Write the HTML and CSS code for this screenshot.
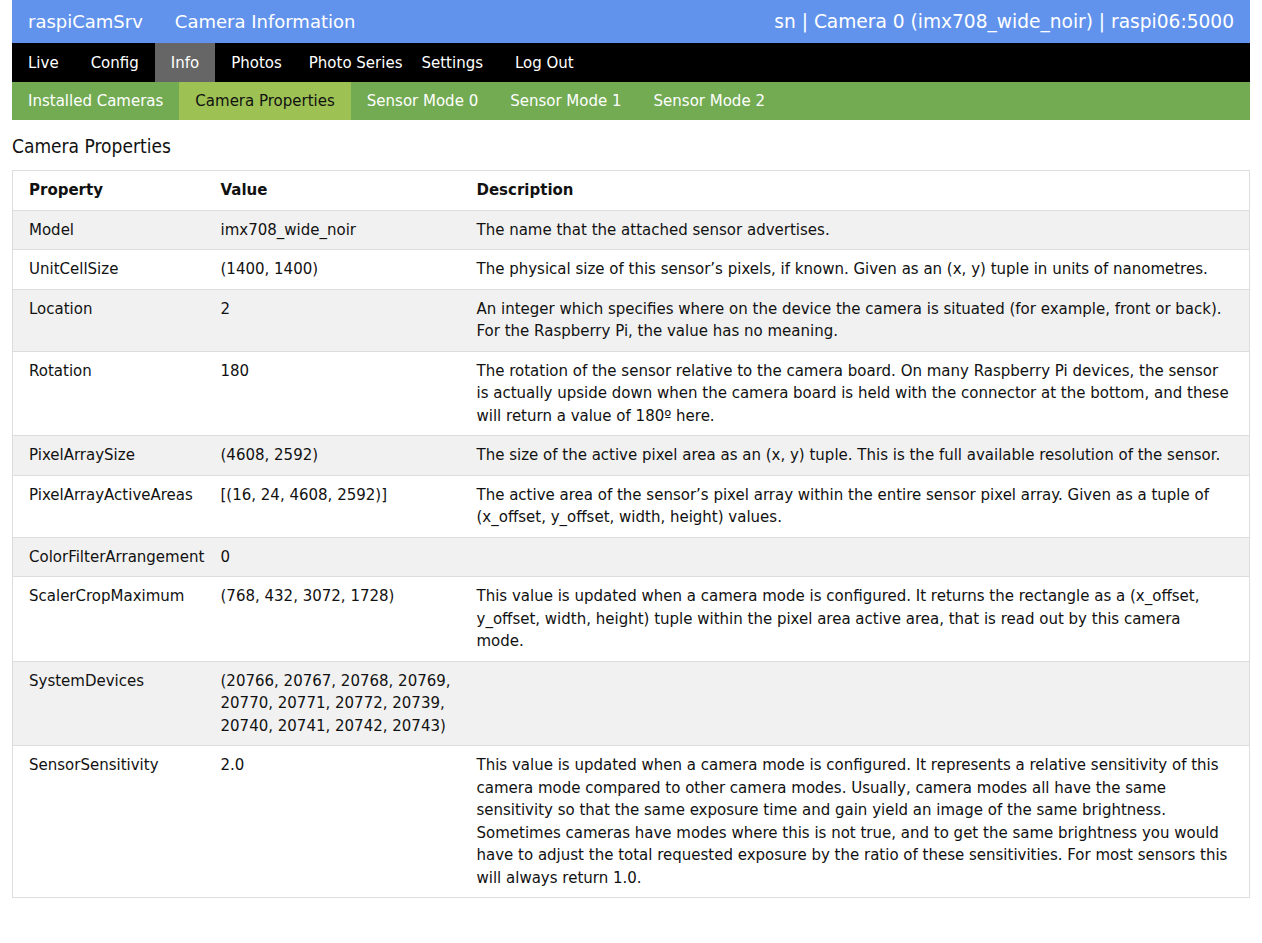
FILE: index.html
```html
<!DOCTYPE html>
<html lang="en">
<head>
<meta charset="utf-8">
<title>raspiCamSrv - Camera Information</title>
<link rel="stylesheet" href="styles.css">
</head>
<body>
<header class="topbar">
  <div class="brand">
    <span class="app">raspiCamSrv</span>
    <span class="page">Camera Information</span>
  </div>
  <div class="status">sn | Camera 0 (imx708_wide_noir) | raspi06:5000</div>
</header>
<nav class="mainnav">
  <a class="item">Live</a>
  <a class="item">Config</a>
  <a class="item active">Info</a>
  <a class="item snug">Photos</a>
  <a class="item tight">Photo Series</a>
  <a class="item">Settings</a>
  <a class="item">Log Out</a>
</nav>
<nav class="subnav">
  <a class="sub">Installed Cameras</a>
  <a class="sub active">Camera Properties</a>
  <a class="sub">Sensor Mode 0</a>
  <a class="sub">Sensor Mode 1</a>
  <a class="sub">Sensor Mode 2</a>
</nav>
<main class="content">
  <h2 class="title">Camera Properties</h2>
  <table class="props">
    <colgroup><col class="c1"><col class="c2"><col class="c3"></colgroup>
    <thead>
      <tr><th>Property</th><th>Value</th><th>Description</th></tr>
    </thead>
    <tbody>
      <tr><td>Model</td><td>imx708_wide_noir</td><td>The name that the attached sensor advertises.</td></tr>
      <tr><td>UnitCellSize</td><td>(1400, 1400)</td><td>The physical size of this sensor’s pixels, if known. Given as an (x, y) tuple in units of nanometres.</td></tr>
      <tr><td>Location</td><td>2</td><td>An integer which specifies where on the device the camera is situated (for example, front or back). For the Raspberry Pi, the value has no meaning.</td></tr>
      <tr><td>Rotation</td><td>180</td><td>The rotation of the sensor relative to the camera board. On many Raspberry Pi devices, the sensor is actually upside down when the camera board is held with the connector at the bottom, and these will return a value of 180º here.</td></tr>
      <tr><td>PixelArraySize</td><td>(4608, 2592)</td><td>The size of the active pixel area as an (x, y) tuple. This is the full available resolution of the sensor.</td></tr>
      <tr><td>PixelArrayActiveAreas</td><td>[(16, 24, 4608, 2592)]</td><td>The active area of the sensor’s pixel array within the entire sensor pixel array. Given as a tuple of (x_offset, y_offset, width, height) values.</td></tr>
      <tr><td>ColorFilterArrangement</td><td>0</td><td></td></tr>
      <tr><td>ScalerCropMaximum</td><td>(768, 432, 3072, 1728)</td><td>This value is updated when a camera mode is configured. It returns the rectangle as a (x_offset, y_offset, width, height) tuple within the pixel area active area, that is read out by this camera mode.</td></tr>
      <tr><td>SystemDevices</td><td>(20766, 20767, 20768, 20769, 20770, 20771, 20772, 20739, 20740, 20741, 20742, 20743)</td><td></td></tr>
      <tr><td>SensorSensitivity</td><td>2.0</td><td>This value is updated when a camera mode is configured. It represents a relative sensitivity of this camera mode compared to other camera modes. Usually, camera modes all have the same sensitivity so that the same exposure time and gain yield an image of the same brightness. Sometimes cameras have modes where this is not true, and to get the same brightness you would have to adjust the total requested exposure by the ratio of these sensitivities. For most sensors this will always return 1.0.</td></tr>
    </tbody>
  </table>
</main>
</body>
</html>
```

FILE: styles.css
```css
html, body {
  margin: 0;
  padding: 0;
  background: #ffffff;
}
body {
  margin: 0 12px;
  font-family: "DejaVu Sans", sans-serif;
  color: #111;
}
.topbar {
  background: #6193ed;
  color: #fff;
  height: 43px;
  display: flex;
  align-items: center;
  justify-content: space-between;
  padding: 0 16px;
  font-size: 18px;
  line-height: 22px;
}
.brand {
  display: flex;
  gap: 32px;
}
.status {
  font-size: 18.6px;
}
.mainnav {
  background: #000;
  height: 39px;
  display: flex;
  align-items: stretch;
}
.mainnav .item {
  color: #fff;
  font-size: 15px;
  padding: 0 16px;
  display: flex;
  align-items: center;
}
.mainnav .item.snug {
  padding-right: 11px;
}
.mainnav .item.tight {
  padding-right: 3px;
}
.mainnav .item.active {
  background: #666;
}
.subnav {
  background: #72ab52;
  height: 38px;
  display: flex;
  align-items: stretch;
}
.subnav .sub {
  color: #fff;
  font-size: 15px;
  padding: 0 16px;
  display: flex;
  align-items: center;
}
.subnav .sub.active {
  background: #9dc153;
  color: #111;
}
.content {
  padding: 0;
}
.title {
  font-family: "DejaVu Sans Condensed", "DejaVu Sans", sans-serif;
  font-stretch: condensed;
  font-size: 19px;
  font-weight: normal;
  margin: 14px 0 12px;
  line-height: 24px;
}
.props {
  width: 100%;
  table-layout: fixed;
  border-collapse: collapse;
  border: 1px solid #ddd;
  font-size: 15px;
  line-height: 22.5px;
}
.props col.c1 { width: 192px; }
.props col.c2 { width: 256px; }
.props th, .props td {
  text-align: left;
  vertical-align: top;
  padding: 8px 0 8px 16px;
  border-bottom: 1px solid #ddd;
}
.props th:last-child, .props td:last-child {
  padding-right: 18px;
}
.props th {
  font-weight: bold;
}
.props tbody tr:nth-child(odd) {
  background: #f1f1f1;
}
```
